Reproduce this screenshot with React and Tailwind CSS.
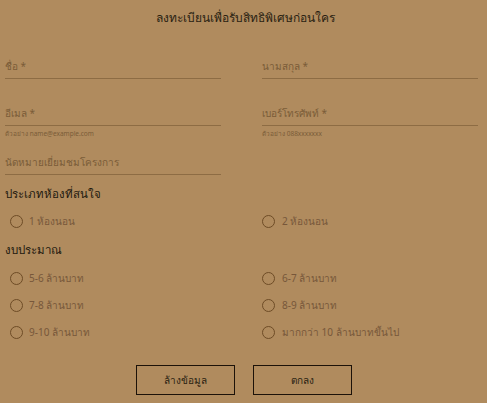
import React from 'react';

const Field = ({ label, helper }) => (
    <div className="w-[216px]">
        <div className="h-[16px] leading-[16px] text-[10px] text-[#7a5c38] border-b border-[#8d6c44] box-content pb-[4px]">
            {label}
        </div>
        {helper !== undefined && (
            <div className="h-[9px] mt-[3px] leading-[9px] text-[6.5px] text-[#7a5c38]">{helper}</div>
        )}
    </div>
);

const Radio = ({ label, right }) => (
    <label className={right ? 'w-[216px] h-[20px] flex items-center gap-[7px]' : 'w-[216px] h-[20px] flex items-center gap-[6px] pl-[5px]'}>
        <span className="w-[13px] h-[13px] rounded-full border-[1.5px] border-[#6e4c26] shrink-0" />
        <span className="text-[10px] text-[#77573a]">{label}</span>
    </label>
);

const App = () => {
    return (
        <div className="w-[487px] h-[403px] bg-[#b08b5e] overflow-hidden px-[5px] pt-[10px]" style={{ fontFamily: '"Noto Sans", "DejaVu Sans", sans-serif' }}>
            <h1 className="h-[16px] leading-[16px] text-center text-[12px] text-[#2a1f12] pl-[4px]">
                ลงทะเบียนเพื่อรับสิทธิพิเศษก่อนใคร
            </h1>

            <div className="flex gap-[41px] mt-[32px]">
                <Field label="ชื่อ *" />
                <Field label="นามสกุล *" />
            </div>

            <div className="flex gap-[41px] mt-[26px]">
                <Field label="อีเมล *" helper="ตัวอย่าง name@example.com" />
                <Field label="เบอร์โทรศัพท์ *" helper="ตัวอย่าง 088xxxxxxx" />
            </div>

            <div className="flex gap-[41px] mt-[16px]">
                <Field label="นัดหมายเยี่ยมชมโครงการ" />
            </div>

            <h2 className="mt-[10px] h-[18px] leading-[18px] text-[11.5px] text-[#22190e]">ประเภทห้องที่สนใจ</h2>
            <div className="flex gap-[41px] mt-[8px]">
                <Radio label="1 ห้องนอน" />
                <Radio label="2 ห้องนอน" right />
            </div>

            <h2 className="mt-[10px] h-[18px] leading-[18px] text-[11.5px] text-[#22190e]">งบประมาณ</h2>
            <div className="grid grid-cols-[216px_216px] gap-x-[41px] gap-y-[7px] mt-[9px]">
                <Radio label="5-6 ล้านบาท" />
                <Radio label="6-7 ล้านบาท" right />
                <Radio label="7-8 ล้านบาท" />
                <Radio label="8-9 ล้านบาท" right />
                <Radio label="9-10 ล้านบาท" />
                <Radio label="มากกว่า 10 ล้านบาทขึ้นไป" right />
            </div>

            <div className="flex justify-center gap-[18px] mt-[23px]">
                <button className="w-[99px] h-[30px] border-[1.5px] border-[#1c1209] text-[10px] text-[#2a1f12]">ล้างข้อมูล</button>
                <button className="w-[99px] h-[30px] border-[1.5px] border-[#1c1209] text-[10px] text-[#2a1f12]">ตกลง</button>
            </div>
        </div>
    );
};

export default App;
